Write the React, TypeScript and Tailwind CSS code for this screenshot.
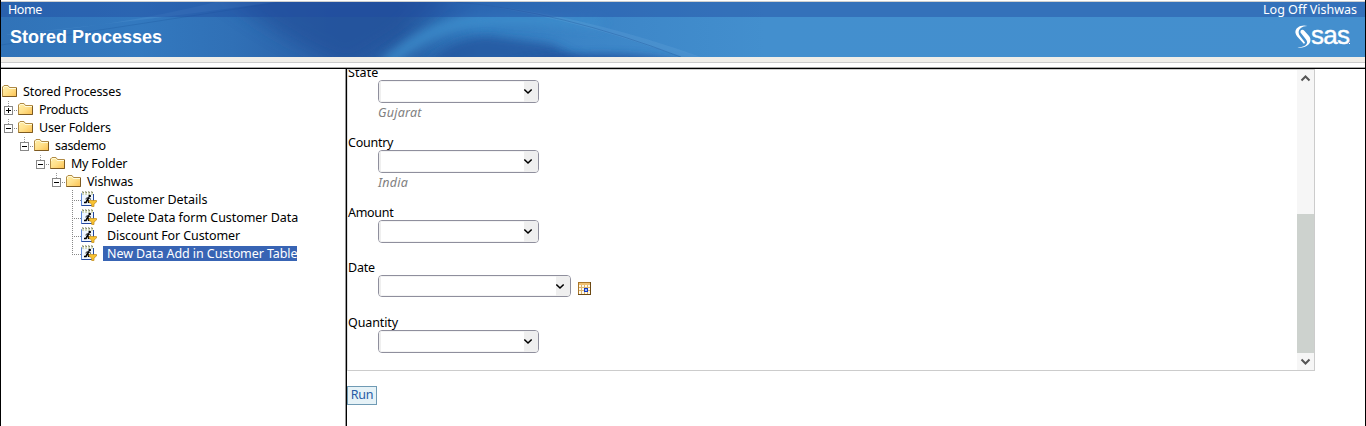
import React from "react";

const FONT = "font-['Noto_Sans','Open_Sans',sans-serif]";

function Folder() {
  return (
    <svg width="16" height="16" viewBox="0 0 16 16" className="block shrink-0">
      <defs>
        <linearGradient id="fold" x1="0" y1="0" x2="1" y2="1">
          <stop offset="0" stopColor="#fff0b0" />
          <stop offset=".5" stopColor="#ffe08a" />
          <stop offset="1" stopColor="#fbc050" />
        </linearGradient>
      </defs>
      <path d="M.5 13.500V4l1.500-1.500h4L7.500 4.500h7v9z" fill="url(#fold)" stroke="#b08a45" />
      <path d="M1.500 6V4.500L2.500 3.500h3L7 5.500h7" fill="none" stroke="#fffbd9" />
      <path d="M.5 13.500h14V5" fill="none" stroke="#7d5a22" />
    </svg>
  );
}

function Toggle({ open }: { open: boolean }) {
  return (
    <svg width="14" height="18" viewBox="0 0 14 18" className="block shrink-0" shapeRendering="crispEdges">
      <path d="M4.500 1v1M4.500 3v1M4.500 5v1" stroke="#999" />
      <rect x=".5" y="6.500" width="8" height="8" fill="#fff" stroke="#888" />
      <path d={open ? "M2 10.500h5" : "M2 10.500h5M4.500 8v5"} stroke="#000" />
      <path d="M10 10.500h1M12 10.500h1" stroke="#888" />
    </svg>
  );
}

function Branch({ last }: { last: boolean }) {
  return (
    <svg width="9" height="18" viewBox="0 0 9 18" className="block shrink-0" shapeRendering="crispEdges">
      <path d={last ? "M.5 0v11" : "M.5 0v18"} stroke="#888" strokeDasharray="1 1" />
      <path d="M0 10.500h9" stroke="#888" strokeDasharray="1 1" />
    </svg>
  );
}

function Process() {
  return (
    <svg width="16" height="16" viewBox="0 0 16 16" className="block shrink-0">
      <path d="M.5 2.500h12v12H.5z" fill="#f0f7ff" stroke="#5a86d8" />
      <path d="M.5 14.500h12V3" fill="none" stroke="#24489c" />
      <path d="M1 2.500h12" stroke="#fff" />
      <path d="M1.500.5l1 1.500M4.500.5l1 1.500M7.500.5l1 1.500M10.500.5l1 1.500" stroke="#56602c" strokeWidth="1.100" />
      <path d="M1 3h12" stroke="#a3ad63" strokeWidth=".8" strokeDasharray="2 1" />
      <circle cx="8.700" cy="5" r="1.300" fill="#000" />
      <path d="M8 6.500L6.200 9.200M6.500 9L8 10.500 7.500 12M6.200 9L5 11.500H3" fill="none" stroke="#000" strokeWidth="1.700" />
      <path d="M4.500 8L6 6.800l2.500.4L10 8.500" fill="none" stroke="#000" strokeWidth=".9" />
      <path d="M8 9.500h7.500v1.500l-2.500 2v2.500h-2.300V13L8 11z" fill="#f8c231" stroke="#c08a18" strokeWidth=".7" />
    </svg>
  );
}

type Node = { text: string; pad: string; kind: "root" | "open" | "closed" | "leaf" | "last"; w: string };

const nodes: Node[] = [
  { text: "Stored Processes", pad: "pl-[1px]", kind: "root", w: "tracking-[-0.12px]" },
  { text: "Products", pad: "pl-[3px]", kind: "closed", w: "tracking-[-0.34px]" },
  { text: "User Folders", pad: "pl-[3px]", kind: "open", w: "tracking-[-0.16px]" },
  { text: "sasdemo", pad: "pl-[19px]", kind: "open", w: "tracking-[-0.3px]" },
  { text: "My Folder", pad: "pl-[35px]", kind: "open", w: "tracking-[-0.22px]" },
  { text: "Vishwas", pad: "pl-[51px]", kind: "open", w: "tracking-[-0.16px]" },
  { text: "Customer Details", pad: "pl-[71px]", kind: "leaf", w: "tracking-[-0.04px]" },
  { text: "Delete Data form Customer Data", pad: "pl-[71px]", kind: "leaf", w: "tracking-[-0.05px]" },
  { text: "Discount For Customer", pad: "pl-[71px]", kind: "leaf", w: "tracking-[-0.1px]" },
  { text: "New Data Add in Customer Table", pad: "pl-[71px]", kind: "last", w: "tracking-[-0.08px]" },
];

function TreeRow({ n }: { n: Node }) {
  const leaf = n.kind === "leaf" || n.kind === "last";
  return (
    <div className={`flex h-[18px] items-center ${n.pad}`}>
      {leaf && <Branch last={n.kind === "last"} />}
      {(n.kind === "open" || n.kind === "closed") && <Toggle open={n.kind === "open"} />}
      {leaf ? <Process /> : <Folder />}
      <span
        className={`whitespace-nowrap leading-[15px] ${n.w} ${leaf ? "ml-[6px] pl-1" : "ml-[5px]"} ${
          n.kind === "last" ? "bg-[#3864b4] text-white" : ""
        }`}
      >
        {n.text}
      </span>
    </div>
  );
}

function Select({ date = false }: { date?: boolean }) {
  return (
    <div
      className={`flex shrink-0 overflow-hidden rounded-[4px] border border-[#8f8f9d] bg-white ${
        date ? "h-[22px] w-[193px]" : "h-[23px] w-[161px]"
      }`}
    >
      <div className="w-[2px] bg-[#efefef]" />
      <div className="grow border-y border-[#f4f4f4]" />
      <div className="flex w-[14px] items-center bg-[#efefef]">
        <svg width="9" height="7" viewBox="0 0 9 7" className="block">
          <path d="M.3 1.500L4 5 7.700 1.500" fill="none" stroke="#000" strokeWidth="1.600" />
        </svg>
      </div>
    </div>
  );
}

function Calendar() {
  return (
    <svg width="13" height="13" viewBox="0 0 13 13" className="mt-[7px] ml-[7px] block" shapeRendering="crispEdges">
      <rect width="13" height="13" fill="#a8752a" />
      <path d="M0 12.500h13M12.500 0v13" stroke="#6b4813" />
      <rect x="1" y="1" width="11" height="2" fill="#f0c070" />
      <rect x="1" y="3" width="11" height="9" fill="#fff8e6" />
      <path d="M1 5.500h11M1 8.500h11M3.500 3v9M6.500 3v9M9.500 3v9" stroke="#dcb36c" />
      <rect x="6.500" y="6.500" width="3" height="3" fill="#9cc0ff" stroke="#1238c0" />
    </svg>
  );
}

function Field({ label, hint, date, h, w = "" }: { label: string; hint?: string; date?: boolean; h: string; w?: string }) {
  return (
    <div className={`shrink-0 ${h}`}>
      <div className={`h-[15px] pl-px leading-[15px] ${w}`}>{label}</div>
      <div className="flex pl-[31px]">
        <Select date={date} />
        {date && <Calendar />}
      </div>
      {hint && <div className="pl-[31px] leading-[19px] tracking-[0.25px] text-[#808080] italic">{hint}</div>}
    </div>
  );
}

function Waves() {
  return (
    <svg width="1364" height="55" viewBox="0 0 1364 55" className="absolute inset-0 block">
      <defs>
        <linearGradient id="base" x1="0" x2="1">
          <stop offset="0" stopColor="#3173b8" />
          <stop offset=".1" stopColor="#3379bf" />
          <stop offset=".17" stopColor="#3070b6" />
          <stop offset=".24" stopColor="#2a60a8" />
          <stop offset=".29" stopColor="#285da3" />
          <stop offset=".35" stopColor="#337cc0" />
          <stop offset=".43" stopColor="#3c85c7" />
          <stop offset=".56" stopColor="#438fce" />
          <stop offset="1" stopColor="#448fce" />
        </linearGradient>
        <filter id="soft" x="-30%" y="-80%" width="160%" height="260%">
          <feGaussianBlur stdDeviation="14 7" />
        </filter>
        <filter id="soft2" x="-20%" y="-80%" width="140%" height="260%">
          <feGaussianBlur stdDeviation="6 4" />
        </filter>
      </defs>
      <rect width="1364" height="55" fill="url(#base)" />
      <path d="M220-10H450L405 30 350 65Q290 45 220-10z" fill="#215099" opacity=".65" filter="url(#soft)" />
      <path d="M385 62Q430 22 480 18T600 22" fill="none" stroke="#3d8dcc" strokeWidth="13" opacity=".8" filter="url(#soft2)" />
      <path d="M425 62Q450 36 485 34L550 42 590 62z" fill="#24539c" opacity=".75" filter="url(#soft2)" />
      <path d="M500 64Q600 40 700 64z" fill="#204f9c" opacity=".85" filter="url(#soft2)" />
      <path d="M0 33Q120 22 275 0H215Q110 26 0 33z" fill="#6aabe0" opacity=".2" />
      <path d="M0 43Q100 28 280 0" fill="none" stroke="#1b559d" opacity=".3" />
      <path d="M455 0Q570 9 700 55H680Q560 12 455 0z" fill="#78b3e3" opacity=".18" />
      <path d="M455 0Q560 9 680 55" fill="none" stroke="#174c91" opacity=".3" />
      <rect width="1364" height="15" fill="#214b9f" opacity=".43" />
    </svg>
  );
}

function Logo() {
  return (
    <div className="flex h-[25px] w-[57px] items-center text-white">
      <svg width="17" height="24" viewBox="0 0 17 24" className="block shrink-0">
        <path d="M12.500 1C6-1-.5 3 .5 8c.4 2.300 2 3.700 3.500 5.500l5 5.500 1-1.500-5-6.500C1.500 7 5 .8 12.500 1z" fill="#fff" />
        <path d="M5.500 7.500C5 4.500 8 4 9.500 6l4.500 5c4.500 6-2 13-11.500 11.500 7 0 12-3.500 8.500-8z" fill="#fff" />
      </svg>
      <span className="-mt-[4px] -ml-px font-['Liberation_Sans',Arial,sans-serif] text-[26px] leading-6 tracking-[-0.7px] [-webkit-text-stroke:0.4px_white]">
        sas
      </span>
      <span className="mt-3 h-px w-px shrink-0 bg-white" />
    </div>
  );
}

function ScrollArrow({ up = false }: { up?: boolean }) {
  return (
    <svg width="17" height="17" viewBox="0 0 17 17" className="block">
      <path d={up ? "M4.500 10.500L8.500 6.500l4 4" : "M4.500 6.500l4 4 4-4"} fill="none" stroke="#555" strokeWidth="2" />
    </svg>
  );
}

export default function App() {
  return (
    <div className={`flex h-[426px] w-[1366px] flex-col overflow-hidden border-x border-black bg-white text-[12.5px] text-black ${FONT}`}>
      <div className="mt-px h-px shrink-0 bg-[#cfcfcf]" />
      <header className="relative h-[55px] shrink-0 text-white">
        <Waves />
        <div className="relative flex h-[15px] justify-between pr-2 pl-[7px] leading-[16px]">
          <span className="tracking-[-0.4px]">Home</span>
          <span className="whitespace-nowrap">Log Off Vishwas</span>
        </div>
        <div className="relative flex h-10 items-center justify-between pr-[13px] pl-[9px]">
          <h1 className="font-['Liberation_Sans',Arial,sans-serif] text-[18px] leading-5 font-bold">Stored Processes</h1>
          <Logo />
        </div>
      </header>
      <div className="h-[6px] shrink-0 border-b border-[#cccccc] bg-[#f0eee9]" />
      <div className="mt-1 h-[2px] shrink-0 border-t border-b border-t-[#aaa] border-b-black" />
      <div className="flex min-h-0 grow">
        <nav className="w-[344px] shrink-0 pt-[13px]">
          {nodes.map((n) => (
            <TreeRow key={n.text} n={n} />
          ))}
        </nav>
        <div className="w-[2px] shrink-0 border-r border-l border-r-black border-l-[#999]" />
        <main className="min-w-0 grow">
          <section className="flex h-[302px] w-[968px] border border-[#cccccc] border-l-[#ddd]">
            <div className="-ml-px flex grow flex-col overflow-hidden">
              <div className="-mt-[5px] flex flex-col">
                <Field label="State" hint="Gujarat" h="h-[70px]" w="tracking-[0.1px]" />
                <Field label="Country" hint="India" h="h-[70px]" w="tracking-[-0.25px]" />
                <Field label="Amount" h="h-[55px]" w="tracking-[-0.3px]" />
                <Field label="Date" date h="h-[55px]" w="tracking-[-0.2px]" />
                <Field label="Quantity" h="h-[40px]" w="tracking-[-0.1px]" />
              </div>
            </div>
            <div className="flex w-[17px] shrink-0 flex-col bg-[#f6f6f6]">
              <ScrollArrow up />
              <div className="mt-[127px] h-[139px] bg-[#cdd2ce]" />
              <ScrollArrow />
            </div>
          </section>
          <button className="mt-[15px] flex h-[19px] w-[30px] items-center justify-center border border-[#6f9ab4] bg-[#e6f2f7] tracking-[-0.3px] text-[#265ca5]">
            Run
          </button>
        </main>
      </div>
    </div>
  );
}
